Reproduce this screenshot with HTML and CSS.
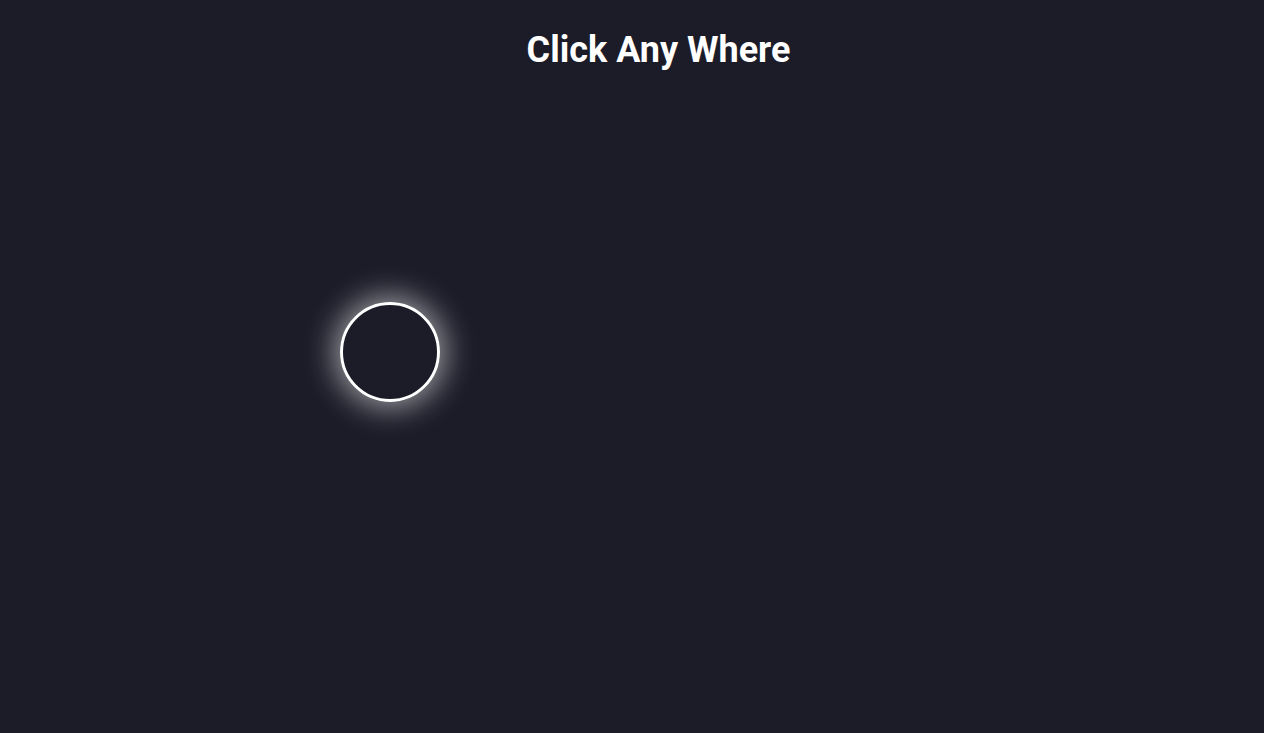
FILE: index.html
```html
<!DOCTYPE html>
<html lang="en">
<head>
<meta charset="utf-8">
<title>Click Any Where</title>
<link rel="stylesheet" href="styles.css">
</head>
<body>
<h1 class="title">Click Any Where</h1>
<div class="ripple"></div>
</body>
</html>
```
FILE: styles.css
```css
html, body {
  margin: 0;
  height: 100%;
}
body {
  background: #1b1c28;
  font-family: Roboto, "Liberation Sans", sans-serif;
  color: #ffffff;
  overflow: hidden;
  position: relative;
}
.title {
  margin: 0;
  padding-top: 29px;
  padding-left: 53px;
  text-align: center;
  font-size: 36px;
  font-weight: 700;
  line-height: 1.17;
}
.ripple {
  position: absolute;
  left: 340px;
  top: 302px;
  width: 100px;
  height: 100px;
  box-sizing: border-box;
  border: 3px solid #ffffff;
  border-radius: 50%;
  box-shadow: 0 0 30px 6px rgba(255, 255, 255, 0.55);
}
```
